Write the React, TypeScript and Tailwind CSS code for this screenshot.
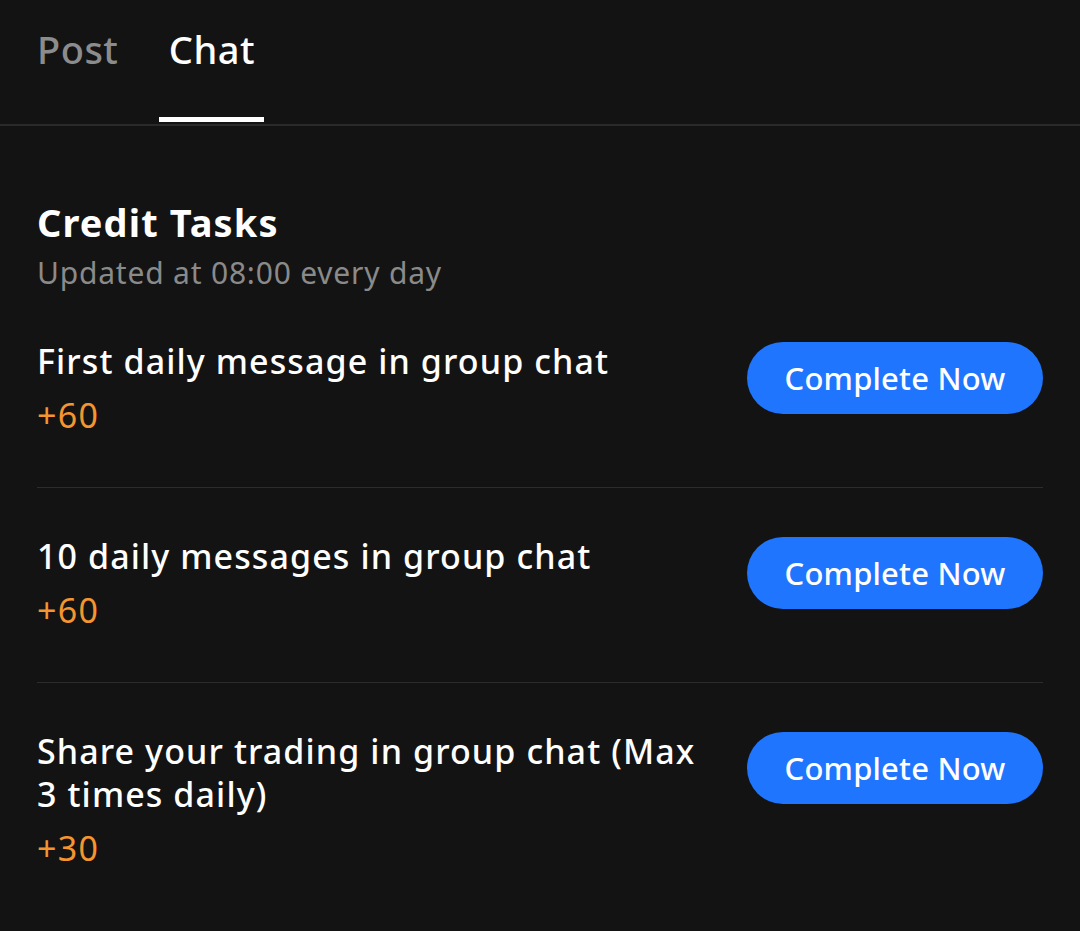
import React from "react";

const tasks = [
  { id: 1, title: "First daily message in group chat", points: 60 },
  { id: 2, title: "10 daily messages in group chat", points: 60 },
  { id: 3, title: "Share your trading in group chat (Max 3 times daily)", points: 30 },
];

const App: React.FC = () => {
  return (
    <div
      className="min-h-screen w-[1080px] bg-[#131313] text-white"
      style={{ fontFamily: '"Noto Sans", "Open Sans", sans-serif' }}
    >
      {/* Tabs */}
      <div className="flex h-[126px] items-stretch border-b-2 border-[#2a2a2a] pl-[37px]">
        <div className="flex items-center">
          <span className="mt-[-26px] text-[38px] font-medium tracking-[0.5px] text-[#8c8c8c]">Post</span>
        </div>
        <div className="relative ml-[41px] flex w-[105px] items-center justify-center">
          <span className="mt-[-26px] text-[38px] font-medium tracking-[0.5px] text-white">Chat</span>
          <div className="absolute bottom-[2px] left-0 h-[5px] w-[105px] bg-white" />
        </div>
      </div>

      {/* Credit tasks */}
      <section className="px-[37px] pt-[72px]">
        <h1 className="text-[38px] leading-[48px] font-bold tracking-[1.1px]">Credit Tasks</h1>
        <p className="mt-[7px] text-[30px] leading-[40px] tracking-[0.8px] text-[#8a8a8a]">
          Updated at 08:00 every day
        </p>

        <div className="mt-[47px]">
          {tasks.map((task, index) => (
            <div
              key={task.id}
              className={`flex items-start justify-between ${
                index < tasks.length - 1 ? "border-b border-[#2c2c2c] pb-[50px]" : ""
              } ${index > 0 ? "pt-[47px]" : ""}`}
            >
              <div className="w-[680px]">
                <p className="text-[34px] leading-[43px] font-medium tracking-[1.1px] text-white">{task.title}</p>
                <p className="mt-[11px] text-[34px] leading-[43px] tracking-[1.3px] text-[#f5952f]">
                  +{task.points}
                </p>
              </div>
              <button className="mt-[2px] h-[72px] w-[296px] rounded-full bg-[#1f75fe] text-[31px] font-medium tracking-[0.2px] text-white">
                Complete Now
              </button>
            </div>
          ))}
        </div>
      </section>
    </div>
  );
};

export default App;
